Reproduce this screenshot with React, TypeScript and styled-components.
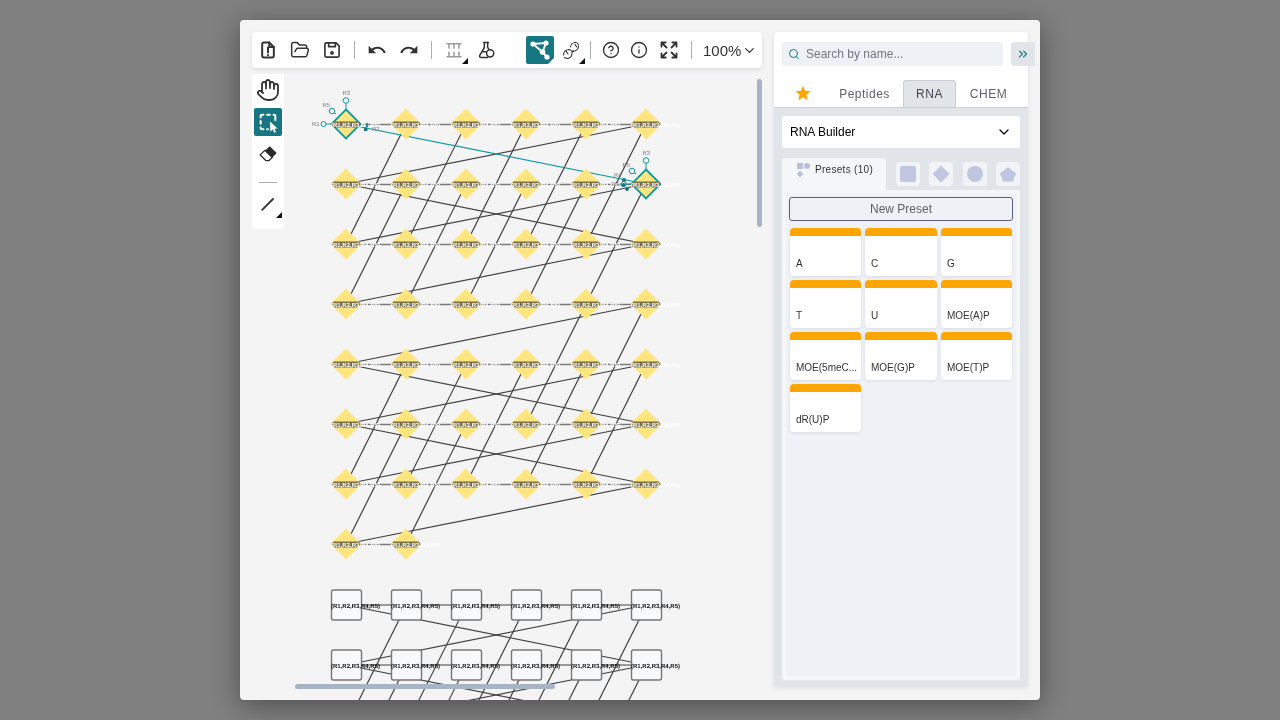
import React from 'react';
import styled, { createGlobalStyle } from 'styled-components';
import { ChevronDown, ChevronsRight, CircleHelp, FolderOpen, Hand, Info, Search } from 'lucide-react';

const Global = createGlobalStyle`
  html, body { margin: 0; padding: 0; height: 100%; background: #808080; overflow: hidden; }
  body { font-family: "Liberation Sans", Arial, sans-serif; }
  #root { height: 100%; }
`;
const Page = styled.div`
  height: 720px;
  padding-top: 20px;
  box-sizing: border-box;
`;
const Modal = styled.div`
  width: 800px;
  height: 680px;
  margin: 0 auto;
  padding: 12px 0 0 12px;
  box-sizing: border-box;
  display: flex;
  gap: 12px;
  background: #f4f4f4;
  border-radius: 4px;
  overflow: hidden;
  will-change: transform;
  box-shadow: 0 6px 28px rgba(0, 0, 0, 0.4);
`;
const Editor = styled.div`
  width: 510px;
  display: flex;
  flex-direction: column;
  gap: 6px;
`;
const Toolbar = styled.div`
  height: 36px;
  flex: none;
  display: flex;
  align-items: center;
  padding-left: 2px;
  background: #fff;
  border-radius: 4px;
  box-shadow: 0 2px 4px rgba(103, 104, 132, 0.15);
`;
const ToolGroup = styled.div<{ $gap: number; $left?: number }>`
  display: flex;
  align-items: center;
  gap: ${p => p.$gap}px;
  margin-left: ${p => p.$left ?? 0}px;
`;
const ToolBtn = styled.button<{ $active?: boolean }>`
  position: relative;
  width: 28px;
  height: 28px;
  padding: 0;
  flex: none;
  display: flex;
  align-items: center;
  justify-content: center;
  border: 0;
  border-radius: 2px;
  background: ${p => (p.$active ? '#167782' : 'transparent')};
  color: ${p => (p.$active ? '#fff' : '#333')};
`;
const Corner = styled.span<{ $light?: boolean }>`
  position: absolute;
  right: 0;
  bottom: 0;
  width: 0;
  height: 0;
  border-style: solid;
  border-width: 0 0 6px 6px;
  border-color: transparent transparent ${p => (p.$light ? '#fff' : '#111')} transparent;
`;
const Sep = styled.span`
  width: 1px;
  height: 18px;
  flex: none;
  background: #a9adb5;
`;
const Zoom = styled.div`
  display: flex;
  align-items: center;
  gap: 1px;
  margin-left: 11px;
  font-size: 15px;
  color: #333;
`;
const Workspace = styled.div`
  flex: 1;
  min-height: 0;
  display: flex;
`;
const Rail = styled.div`
  width: 32px;
  height: 155px;
  box-sizing: border-box;
  padding-top: 2px;
  display: flex;
  flex-direction: column;
  align-items: center;
  gap: 4px;
  flex: none;
  background: #fff;
  border-radius: 0 0 4px 4px;
`;
const RailSep = styled.span`
  width: 18px;
  height: 1px;
  background: #a9adb5;
  margin: 10px 0 3px;
  flex: none;
`;
const Canvas = styled.div`
  position: relative;
  flex: 1;
  overflow: hidden;
`;
const Drawing = styled.svg`
  display: block;
`;
const VThumb = styled.div`
  position: absolute;
  right: 0;
  top: 5px;
  width: 5px;
  height: 148px;
  border-radius: 3px;
  background: #a9b4c2;
`;
const HThumb = styled.div`
  position: absolute;
  left: 11px;
  bottom: 11px;
  width: 260px;
  height: 5px;
  border-radius: 3px;
  background: #a9b4c2;
`;
const Library = styled.div`
  width: 254px;
  height: 654px;
  flex: none;
  display: flex;
  flex-direction: column;
  background: #e1e5ea;
  box-shadow: 0 2px 4px rgba(103, 104, 132, 0.15);
  border-radius: 4px;
`;
const LibHead = styled.div`
  background: #fff;
  border-radius: 4px 4px 0 0;
  border-bottom: 1px solid #c9cfd7;
  padding: 10px 0 0 8px;
`;
const SearchRow = styled.div`
  display: flex;
  gap: 8px;
  margin-bottom: 14px;
`;
const SearchBox = styled.div`
  width: 221px;
  height: 24px;
  flex: none;
  box-sizing: border-box;
  padding-left: 6px;
  display: flex;
  align-items: center;
  gap: 6px;
  background: #eef1f5;
  border-radius: 3px;
  font-size: 12px;
  color: #6f7780;
`;
const Collapse = styled.div`
  width: 24px;
  height: 24px;
  flex: none;
  display: flex;
  align-items: center;
  justify-content: center;
  background: #e1e5ea;
  border-radius: 3px 0 0 3px;
  color: #167782;
`;
const Tabs = styled.div`
  display: flex;
  height: 27px;
  margin-left: -8px;
`;
const StarTab = styled.div`
  width: 52px;
  box-sizing: border-box;
  padding: 5px 0 0 6px;
  display: flex;
  justify-content: center;
`;
const Tab = styled.div<{ $w: number; $active?: boolean }>`
  width: ${p => p.$w}px;
  box-sizing: border-box;
  display: flex;
  align-items: center;
  justify-content: center;
  font-size: 12px;
  letter-spacing: 0.5px;
  color: ${p => (p.$active ? '#41474e' : '#5e6166')};
  background: ${p => (p.$active ? '#e1e5ea' : 'transparent')};
  border: ${p => (p.$active ? '1px solid #c9cfd7' : '0')};
  border-bottom: 0;
  border-radius: 3px 3px 0 0;
`;
const LibBody = styled.div`
  flex: 1;
  min-height: 0;
  padding: 8px 8px 6px;
  display: flex;
  flex-direction: column;
`;
const Select = styled.div`
  height: 32px;
  flex: none;
  padding: 0 8px;
  display: flex;
  align-items: center;
  justify-content: space-between;
  background: #fff;
  border-radius: 3px;
  font-size: 12px;
  color: #000;
`;
const SubTabs = styled.div`
  height: 32px;
  margin-top: 10px;
  flex: none;
  display: flex;
  align-items: flex-start;
`;
const PresetTab = styled.div`
  width: 104px;
  height: 32px;
  box-sizing: border-box;
  display: flex;
  gap: 5px;
  padding: 4px 0 0 14px;
  background: #f5f6f8;
  border-radius: 3px 3px 0 0;
  font-size: 10px;
  letter-spacing: 0.3px;
  line-height: 15px;
  color: #333;
`;
const ShapeTabs = styled.div`
  display: flex;
  justify-content: space-between;
  flex: 1;
  margin: 4px 0 0 10px;
`;
const ShapeTab = styled.div`
  width: 24px;
  height: 24px;
  display: flex;
  align-items: center;
  justify-content: center;
  background: #f2f3f7;
  border-radius: 4px;
`;
const PresetPanel = styled.div`
  flex: 1;
  min-height: 0;
  padding: 4px;
  background: #f5f6f8;
  border-radius: 0 3px 3px 3px;
  display: flex;
`;
const PresetInner = styled.div`
  flex: 1;
  padding: 3px 3px 0;
  background: #eef1f5;
`;
const NewPreset = styled.button`
  width: 100%;
  height: 24px;
  padding: 0;
  display: block;
  box-sizing: border-box;
  background: #eef1f5;
  border: 1px solid #5b6077;
  border-radius: 3px;
  font: 12px "Liberation Sans", Arial, sans-serif;
  color: #5e6166;
`;
const Cards = styled.div`
  display: grid;
  grid-template-columns: 71px 72px 71px;
  grid-auto-rows: 48px;
  gap: 4px;
  margin: 7px 1px 0;
`;
const Card = styled.div`
  position: relative;
  background: #fff;
  border-radius: 4px;
  border-top: 8px solid #ffa500;
  box-shadow: 0 1px 3px rgba(103, 104, 132, 0.15);
  padding: 21px 2px 0 6px;
  box-sizing: border-box;
  font-size: 10px;
  line-height: 14px;
  color: #333;
  white-space: nowrap;
  overflow: hidden;
`;

const Edge = styled.line<{ $c: string; $w: number }>`
  stroke: ${p => p.$c};
  stroke-width: ${p => p.$w};
`;
const NodeText = styled.text<{ $c: string }>`
  font: bold 6px "Liberation Sans", Arial, sans-serif;
  text-rendering: geometricPrecision;
  fill: ${p => p.$c};
`;
const PinText = styled.text`
  font: 6px "Liberation Sans", Arial, sans-serif;
  text-rendering: geometricPrecision;
  fill: #777;
`;

const TEAL = '#0f9aa0';
const X = [346, 406, 466, 526, 586, 646];
const Y = [124, 184, 244, 304, 364, 424, 484, 544];
const SY = [605, 665];
const LABEL = '(R1,R2,R3,R4,R5)';
type L = [number, number, number, number];

const diag: L[] = [];
const addDiag = (from: number, to: number, r0: number, r1: number) => {
  for (let c = from; c <= to; c++) diag.push([X[c], Y[r0], X[c - 1], Y[r1]]);
};
addDiag(1, 5, 0, 2);
addDiag(1, 5, 1, 3);
addDiag(4, 5, 3, 5);
addDiag(1, 5, 4, 6);
addDiag(1, 2, 5, 7);
for (let c = 1; c <= 5; c++) {
  diag.push([X[c] + 0.5, 605, X[c - 1] + 0.5, 725]);
  diag.push([X[c] + 0.5, 665, X[c - 1] + 0.5, 785]);
}
const slopes: L[] = [
  [0, 184, 5, 124], [0, 184, 5, 244], [0, 244, 5, 184], [0, 304, 5, 244],
  [0, 364, 5, 304], [0, 364, 5, 424], [0, 424, 5, 364], [0, 424, 5, 484],
  [0, 484, 5, 424], [0, 544, 5, 484],
  [0, 605, 5, 665], [0, 665, 5, 605], [0, 665, 5, 725], [0, 725, 5, 665],
].map(([a, b, c, d]) => [X[a], b, X[c], d] as L);

const diamondPts = (x: number, y: number, h: number) =>
  `${x},${y - h} ${x + h},${y} ${x},${y + h} ${x - h},${y}`;

const Diamond = ({ x, y, selected }: { x: number; y: number; selected?: boolean }) => (
  <g>
    <polygon
      points={diamondPts(x, y, selected ? 14.5 : 15.5)}
      fill="#ffe57f"
      stroke={selected ? TEAL : 'none'}
      strokeWidth={1.8}
    />
    <polygon points={`${x - 12.5},${y - 2.5} ${x + 12.5},${y - 2.5} ${x + 14.5},${y} ${x + 11.5},${y + 3.5} ${x - 11.5},${y + 3.5} ${x - 14.5},${y}`} fill="#7a7049" />
    <NodeText $c="#fff" x={x - 15} y={y + 3}>{LABEL}</NodeText>
  </g>
);
const Pins = ({ x, y }: { x: number; y: number }) => (
  <g>
    <Edge $c={TEAL} $w={1} x1={x} y1={y - 15} x2={x} y2={y - 21} />
    <Edge $c="#444" $w={0.8} x1={x - 10} y1={y - 10} x2={x - 13} y2={y - 12} />
    <Edge $c={TEAL} $w={1} x1={x - 15} y1={y} x2={x - 20} y2={y} />
    <circle cx={x} cy={y - 23.5} r={2.8} fill="#f4f4f4" stroke={TEAL} />
    <circle cx={x - 14} cy={y - 13} r={2.8} fill="#f4f4f4" stroke={TEAL} />
    <circle cx={x - 22.5} cy={y} r={2.5} fill="#f4f4f4" stroke={TEAL} />
    <PinText x={x - 3.5} y={y - 29}>R3</PinText>
    <PinText x={x - 23.5} y={y - 17}>R5</PinText>
    <PinText x={x - 34} y={y + 2}>R1</PinText>
  </g>
);

const CanvasDrawing = () => (
  <Drawing width={478} height={626} viewBox="284 74 478 626">
    {[...Y.map(y => [y, y === 544 ? 1 : 5] as const), ...SY.map(y => [y - 0.5, 5] as const)].map(([y, n]) =>
      <Edge key={y} $c="#7c7c7c" $w={1.6} x1={346} y1={y + 0.5} x2={X[n]} y2={y + 0.5} />
    )}
    {[...diag, ...slopes].map((l, i) => (
      <Edge key={i} $c="#444" $w={1.2} x1={l[0]} y1={l[1]} x2={l[2]} y2={l[3]} />
    ))}
    <Edge $c={TEAL} $w={1.2} x1={346} y1={124} x2={646} y2={184} />
    {Y.flatMap((y, r) =>
      X.filter((_, c) => r < 7 || c < 2).map(x => {
        const selected = (r === 0 && x === 346) || (r === 1 && x === 646);
        return <Diamond key={`${x}-${y}`} x={x} y={y} selected={selected} />;
      })
    )}
    <Pins x={346} y={124} />
    <Pins x={646} y={184} />
    <Edge $c={TEAL} $w={2} x1={367} y1={123} x2={367} y2={127} />
    <rect x={364} y={127.5} width={3.5} height={3.5} fill="#167782" />
    <PinText x={372} y={131}>R2</PinText>
    <circle cx={624} cy={180} r={2} fill="#167782" />
    <circle cx={623.5} cy={185} r={2} fill="#167782" />
    <circle cx={627} cy={189} r={2} fill="#167782" />
    <PinText x={614} y={177}>R4</PinText>
    {SY.flatMap(y =>
      X.map(x => (
        <g key={`${x}-${y}`}>
          <rect x={x - 14.5} y={y - 15} width={30} height={30} rx={2} fill="#f8f9fb" stroke="#777" strokeWidth={1.4} />
          <NodeText $c="#111" x={x - 15} y={y + 3}>{LABEL}</NodeText>
        </g>
      ))
    )}
  </Drawing>
);

const I = ({ children, size = 20, sw = 2 }: { children: React.ReactNode; size?: number; sw?: number }) => (
  <svg width={size} height={size} viewBox="0 0 24 24" fill="none" stroke="currentColor" strokeWidth={sw} strokeLinecap="round" strokeLinejoin="round">
    {children}
  </svg>
);

const FileAlert = () => (
  <I sw={2.4}>
    <path d="M13.5 3H7a2 2 0 0 0-2 2v14a2 2 0 0 0 2 2h10a2 2 0 0 0 2-2V8.5z" />
    <path d="M13.5 3v5.5H19" />
    <path d="M12 9v6M12 18v.2" />
  </I>
);
const SaveIcon = () => (
  <I sw={2}>
    <path d="M5 3.5h12l3.5 3.5v12a1.5 1.5 0 0 1-1.5 1.5H5A1.5 1.5 0 0 1 3.5 19V5A1.5 1.5 0 0 1 5 3.5z" />
    <path d="M8 4v4h8V4" />
    <circle cx="12" cy="15.5" r="1.3" fill="currentColor" />
  </I>
);
const Undo = () => (
  <svg width={20} height={20} viewBox="0 0 24 24" fill="currentColor">
    <path d="M12.5 8c-2.65 0-5.05.99-6.9 2.6L2 7v9h9l-3.62-3.62c1.39-1.16 3.16-1.88 5.12-1.88 3.54 0 6.55 2.31 7.6 5.5l2.37-.78C21.08 11.03 17.15 8 12.5 8z" />
  </svg>
);
const Redo = () => (
  <svg width={20} height={20} viewBox="0 0 24 24" fill="currentColor">
    <path d="M18.4 10.6C16.55 8.99 14.15 8 11.5 8c-4.65 0-8.58 3.03-9.96 7.22L3.9 16c1.05-3.19 4.05-5.5 7.6-5.5 1.95 0 3.73.72 5.12 1.88L13 16h9V7l-3.6 3.6z" />
  </svg>
);
const Monomers = () => (
  <svg width={20} height={20} viewBox="0 0 24 24" fill="none" stroke="#9a9a9a" strokeWidth={1.8}>
    <path d="M3 4.5h18M3 20h18" />
    <path d="M6 4.5v6M12 4.5v6M18 4.5v6M6 14v6M12 14v6M18 14v6" />
  </svg>
);
const Flask = () => (
  <I sw={1.8}>
    <path d="M9 3h6M10 3v6L4.5 18.5A1.7 1.7 0 0 0 6 21h8" />
    <path d="M14 3v6l1.5 2" />
    <circle cx="17" cy="16" r="4.3" />
    <path d="M8 14h4" />
  </I>
);
const StructureIcon = () => (
  <svg width={24} height={24} viewBox="0 0 24 24" fill="none" stroke="#fff" strokeWidth={2}>
    <path d="M5 6 18 5M5 6l9.5 8M18 5l-3.5 9M14.5 14l4.5 5" />
    <g fill="#fff" stroke="none">
      <circle cx="5" cy="6" r="2.6" />
      <circle cx="18" cy="5" r="2.6" />
      <circle cx="14.5" cy="14" r="2.8" />
      <circle cx="19" cy="19" r="2.6" />
    </g>
  </svg>
);
const Helix = () => (
  <svg width={21} height={21} viewBox="0 0 24 24" fill="none" stroke="#333" strokeWidth={1.2} strokeLinecap="round">
    <path d="M3 17c0-4 3-6 6-6s3 3 6 2 5-3 5-6-2-5-5-4-4 3-4 5" strokeDasharray="3 1.2" />
    <path d="M4 20c3 2 7 1 8-2s0-5 2-6" />
    <path d="M6 13l2 3M16 5l2 3" />
  </svg>
);
const Expand = () => (
  <I sw={2.2}>
    <path d="M3 8V3h5M3 3l6 6M16 3h5v5M21 3l-6 6M3 16v5h5M3 21l6-6M21 16v5h-5M21 21l-6-6" />
  </I>
);
const SelectTool = () => (
  <svg width={22} height={22} viewBox="0 0 24 24" fill="none">
    <path d="M4 7V5.5A1.5 1.5 0 0 1 5.5 4H7M11 4h3M18 4h.5A1.5 1.5 0 0 1 20 5.5V10M4 11v3M4 18v.5A1.5 1.5 0 0 0 5.5 20H7M11 20h1" stroke="#fff" strokeWidth={2.2} strokeLinecap="round" />
    <path d="M14 11.5 22.5 19l-3.4.3 1.7 3.6-1.9.9-1.7-3.6-2.7 2.2z" fill="#fff" />
  </svg>
);
const Eraser = () => (
  <svg width={22} height={22} viewBox="0 0 24 24">
    <path d="M14 3.5 21.5 11 13 19.5H9.5L3 13z" fill="#2b2b2b" />
    <path d="M8.5 8 3.5 13l6.3 6.2h3.2l3.5-3.5z" fill="#fff" stroke="#2b2b2b" strokeWidth={1.4} />
  </svg>
);
const LineTool = () => (
  <I sw={2.2}><path d="M5 19 18 6" /></I>
);
const FavStar = () => (
  <svg width={16} height={16} viewBox="0 0 24 24" fill="#ffa500">
    <path d="M12 1l3.2 7.6 8.2.7-6.2 5.4 1.9 8L12 18.400l-7.100 4.300 1.900-8L.6 9.300l8.200-.7z" />
  </svg>
);
const PresetsIcon = () => (
  <svg width={14} height={16} viewBox="0 0 14 16" fill="#b8bfd9">
    <rect x="1" y="1" width="6" height="6" />
    <circle cx="11" cy="4" r="3" />
    <path d="M4 8.500 7.200 12 4 15.500.8 12z" />
  </svg>
);
const Shape = ({ children }: { children: React.ReactNode }) => (
  <ShapeTab>
    <svg width={18} height={18} viewBox="0 0 18 18" fill="#c0c6e0">{children}</svg>
  </ShapeTab>
);

const PRESETS = ['A', 'C', 'G', 'T', 'U', 'MOE(A)P', 'MOE(5meC...', 'MOE(G)P', 'MOE(T)P', 'dR(U)P'];

export default function App() {
  return (
    <>
      <Global />
      <Page>
        <Modal>
          <Editor>
            <Toolbar>
              <ToolGroup $gap={4}>
                <ToolBtn><FileAlert /></ToolBtn>
                <ToolBtn><FolderOpen size={20} strokeWidth={1.8} /></ToolBtn>
                <ToolBtn><SaveIcon /></ToolBtn>
              </ToolGroup>
              <ToolGroup $gap={8} $left={8}><Sep /></ToolGroup>
              <ToolGroup $gap={4} $left={8}>
                <ToolBtn><Undo /></ToolBtn>
                <ToolBtn><Redo /></ToolBtn>
              </ToolGroup>
              <ToolGroup $gap={8} $left={8}><Sep /></ToolGroup>
              <ToolGroup $gap={4} $left={8}>
                <ToolBtn><Monomers /><Corner /></ToolBtn>
                <ToolBtn><Flask /></ToolBtn>
              </ToolGroup>
              <ToolGroup $gap={3} $left={26}>
                <ToolBtn $active><StructureIcon /><Corner $light /></ToolBtn>
                <ToolBtn><Helix /><Corner /></ToolBtn>
              </ToolGroup>
              <ToolGroup $gap={0} $left={5}><Sep /></ToolGroup>
              <ToolGroup $gap={0} $left={6}>
                <ToolBtn><CircleHelp size={18} strokeWidth={1.8} /></ToolBtn>
                <ToolBtn><Info size={18} strokeWidth={1.8} /></ToolBtn>
              </ToolGroup>
              <ToolGroup $gap={0} $left={2}><ToolBtn><Expand /></ToolBtn></ToolGroup>
              <ToolGroup $gap={0} $left={8}><Sep /></ToolGroup>
              <Zoom>100%<ChevronDown size={15} /></Zoom>
            </Toolbar>
            <Workspace>
              <Rail>
                <ToolBtn><Hand size={24} strokeWidth={1.8} /></ToolBtn>
                <ToolBtn $active><SelectTool /></ToolBtn>
                <ToolBtn><Eraser /></ToolBtn>
                <RailSep />
                <ToolBtn><LineTool /><Corner /></ToolBtn>
              </Rail>
              <Canvas>
                <CanvasDrawing />
                <VThumb />
                <HThumb />
              </Canvas>
            </Workspace>
          </Editor>
          <Library>
            <LibHead>
              <SearchRow>
                <SearchBox><Search size={12} color="#167782" />Search by name...</SearchBox>
                <Collapse><ChevronsRight size={14} /></Collapse>
              </SearchRow>
              <Tabs>
                <StarTab><FavStar /></StarTab>
                <Tab $w={77}>Peptides</Tab>
                <Tab $w={53} $active>RNA</Tab>
                <Tab $w={65}>CHEM</Tab>
              </Tabs>
            </LibHead>
            <LibBody>
              <Select>RNA Builder<ChevronDown size={16} color="#111" /></Select>
              <SubTabs>
                <PresetTab><PresetsIcon />Presets (10)</PresetTab>
                <ShapeTabs>
                  <Shape><rect x="1" y="1" width="16" height="16" rx="2" /></Shape>
                  <Shape><path d="M9 .5 17.500 9 9 17.500.5 9z" /></Shape>
                  <Shape><circle cx="9" cy="9" r="8" /></Shape>
                  <Shape><path d="M9 2.500l8 5.500-3 8.500H4L1 8z" /></Shape>
                </ShapeTabs>
              </SubTabs>
              <PresetPanel>
                <PresetInner>
                  <NewPreset>New Preset</NewPreset>
                  <Cards>
                    {PRESETS.map(p => <Card key={p}>{p}</Card>)}
                  </Cards>
                </PresetInner>
              </PresetPanel>
            </LibBody>
          </Library>
        </Modal>
      </Page>
    </>
  );
}
